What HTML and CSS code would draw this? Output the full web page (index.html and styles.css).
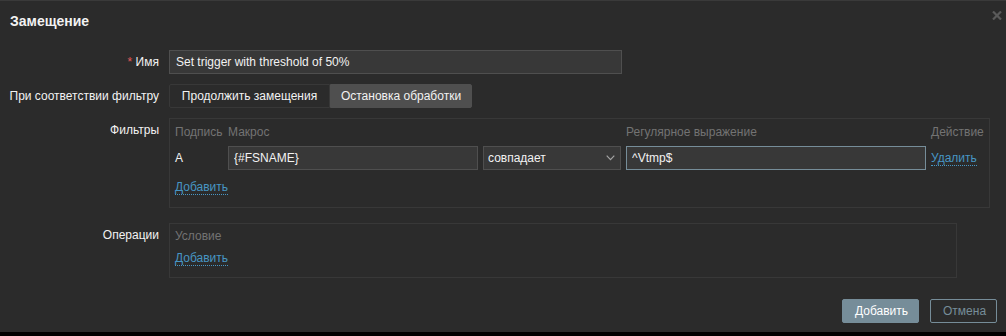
FILE: index.html
```html
<!DOCTYPE html>
<html>
<head>
  <title>Замещение</title>
  <link rel="stylesheet" href="styles.css">
</head>
<body>
  <div class="dialog">
    <div class="dialog-header">
      <h4>Замещение</h4>
      <button class="btn-close" title="Закрыть">
        <svg width="10" height="9" viewBox="0 0 10 9"><path d="M1 0.5 L9 8.5 M9 0.5 L1 8.5" stroke="#5a5a5a" stroke-width="2.2"/></svg>
      </button>
    </div>

    <form class="form-grid">
      <label class="form-label" for="name"><span class="required">*</span> Имя</label>
      <input type="text" id="name" class="input name-input" value="Set trigger with threshold of 50%">

      <label class="form-label">При соответствии фильтру</label>
      <div class="segmented">
        <span class="segment segment-active">Продолжить замещения</span>
        <span class="segment">Остановка обработки</span>
      </div>

      <label class="form-label">Фильтры</label>
      <div class="table-box filters-box">
        <div class="filters-grid">
          <span class="col-head">Подпись</span>
          <span class="col-head">Макрос</span>
          <span class="col-head"></span>
          <span class="col-head">Регулярное выражение</span>
          <span class="col-head">Действие</span>

          <span class="cell-label">A</span>
          <input type="text" class="input" value="{#FSNAME}">
          <div class="select">
            <span>совпадает</span>
            <svg width="9" height="6" viewBox="0 0 9 6"><path d="M0.7 0.7 L4.5 4.7 L8.3 0.7" fill="none" stroke="#a3a3a3" stroke-width="1.2"/></svg>
          </div>
          <input type="text" class="input input-focus" value="^Vtmp$">
          <span class="cell-link"><a href="#" class="link">Удалить</a></span>
        </div>
        <div class="add-row filters-add"><a href="#" class="link">Добавить</a></div>
      </div>

      <label class="form-label ops-label">Операции</label>
      <div class="table-box ops-box">
        <div class="col-head">Условие</div>
        <div class="add-row ops-add"><a href="#" class="link">Добавить</a></div>
      </div>
    </form>

    <div class="dialog-footer">
      <button class="btn btn-primary">Добавить</button>
      <button class="btn btn-alt">Отмена</button>
    </div>
  </div>
</body>
</html>
```

FILE: styles.css
```css
/* dark theme popup */
body {
  margin: 0;
  background-color: #000;
  font-family: "Liberation Sans", Arial, sans-serif;
  font-size: 12px;
  color: #f2f2f2;
}

.dialog {
  background-color: #2b2b2b;
  border-top: 1px solid #3a3a3a;
  height: 331px;
  display: flex;
  flex-direction: column;
}

.dialog-header {
  height: 39px;
  display: flex;
  justify-content: space-between;
  align-items: center;
  padding: 0 4px 0 10px;
}

.dialog-header h4 {
  margin: 0;
  font-size: 14px;
  font-weight: bold;
  color: #f2f2f2;
}

.btn-close {
  align-self: flex-start;
  margin-top: 7px;
  background: none;
  border: none;
  padding: 0;
  cursor: pointer;
}

.form-grid {
  display: grid;
  grid-template-columns: 159px auto;
  column-gap: 10px;
  row-gap: 10px;
  padding-top: 10px;
  justify-items: start;
  align-items: start;
}

.form-label {
  justify-self: end;
  line-height: 24px;
  white-space: nowrap;
}

.required {
  color: #e45959;
}

.input {
  box-sizing: border-box;
  height: 24px;
  background-color: #383838;
  border: 1px solid #4f4f4f;
  color: #f2f2f2;
  font-family: inherit;
  font-size: 12px;
  padding: 0 5px;
  margin: 0;
  outline: none;
}

.name-input {
  width: 453px;
  padding-left: 6px;
}

.input-focus {
  border-color: #768d99;
}

.segmented {
  display: flex;
}

.segment {
  box-sizing: border-box;
  height: 24px;
  line-height: 22px;
  width: 142px;
  text-align: center;
  white-space: nowrap;
  border: 1px solid #4f4f4f;
  background-color: #4f4f4f;
  border-radius: 0 2px 2px 0;
}

.segment-active {
  background-color: #2b2b2b;
  border-color: #383838;
  border-radius: 2px 0 0 2px;
  width: 161px;
}

.table-box {
  box-sizing: border-box;
  border: 1px solid #383838;
}

.filters-box {
  width: 821px;
  height: 90px;
  padding: 4px 5px 0;
}

.filters-grid {
  display: grid;
  grid-template-columns: 48px 250px 138px 300px 1fr;
  column-gap: 5px;
  row-gap: 5px;
  align-items: center;
}

.col-head {
  color: #737373;
  line-height: 18px;
  white-space: nowrap;
}

.cell-label {
  line-height: 24px;
}

.select {
  box-sizing: border-box;
  height: 24px;
  background-color: #383838;
  border: 1px solid #4f4f4f;
  display: flex;
  align-items: center;
  justify-content: space-between;
  padding: 0 5px 0 4px;
}

.link {
  color: #4796c4;
  text-decoration: none;
  border-bottom: 1px dotted #4796c4;
}

.add-row {
  line-height: 18px;
}

.filters-add {
  margin-top: 8px;
}

.ops-label {
  margin-top: 5px;
}

.ops-box {
  width: 788px;
  height: 55px;
  margin-top: 5px;
  padding: 3px 5px 0;
}

.ops-add {
  margin-top: 4px;
}

.dialog-footer {
  display: flex;
  justify-content: flex-end;
  gap: 11px;
  padding: 21px 9px 0 0;
}

.btn {
  box-sizing: border-box;
  height: 24px;
  padding: 0 12px;
  font-family: inherit;
  font-size: 12px;
  border-radius: 2px;
  cursor: pointer;
}

.btn-primary {
  background-color: #768d99;
  border: 1px solid #768d99;
  color: #fff;
  width: 77px;
}

.btn-alt {
  background-color: transparent;
  border: 1px solid #768d99;
  color: #768d99;
  width: 67px;
}
```
